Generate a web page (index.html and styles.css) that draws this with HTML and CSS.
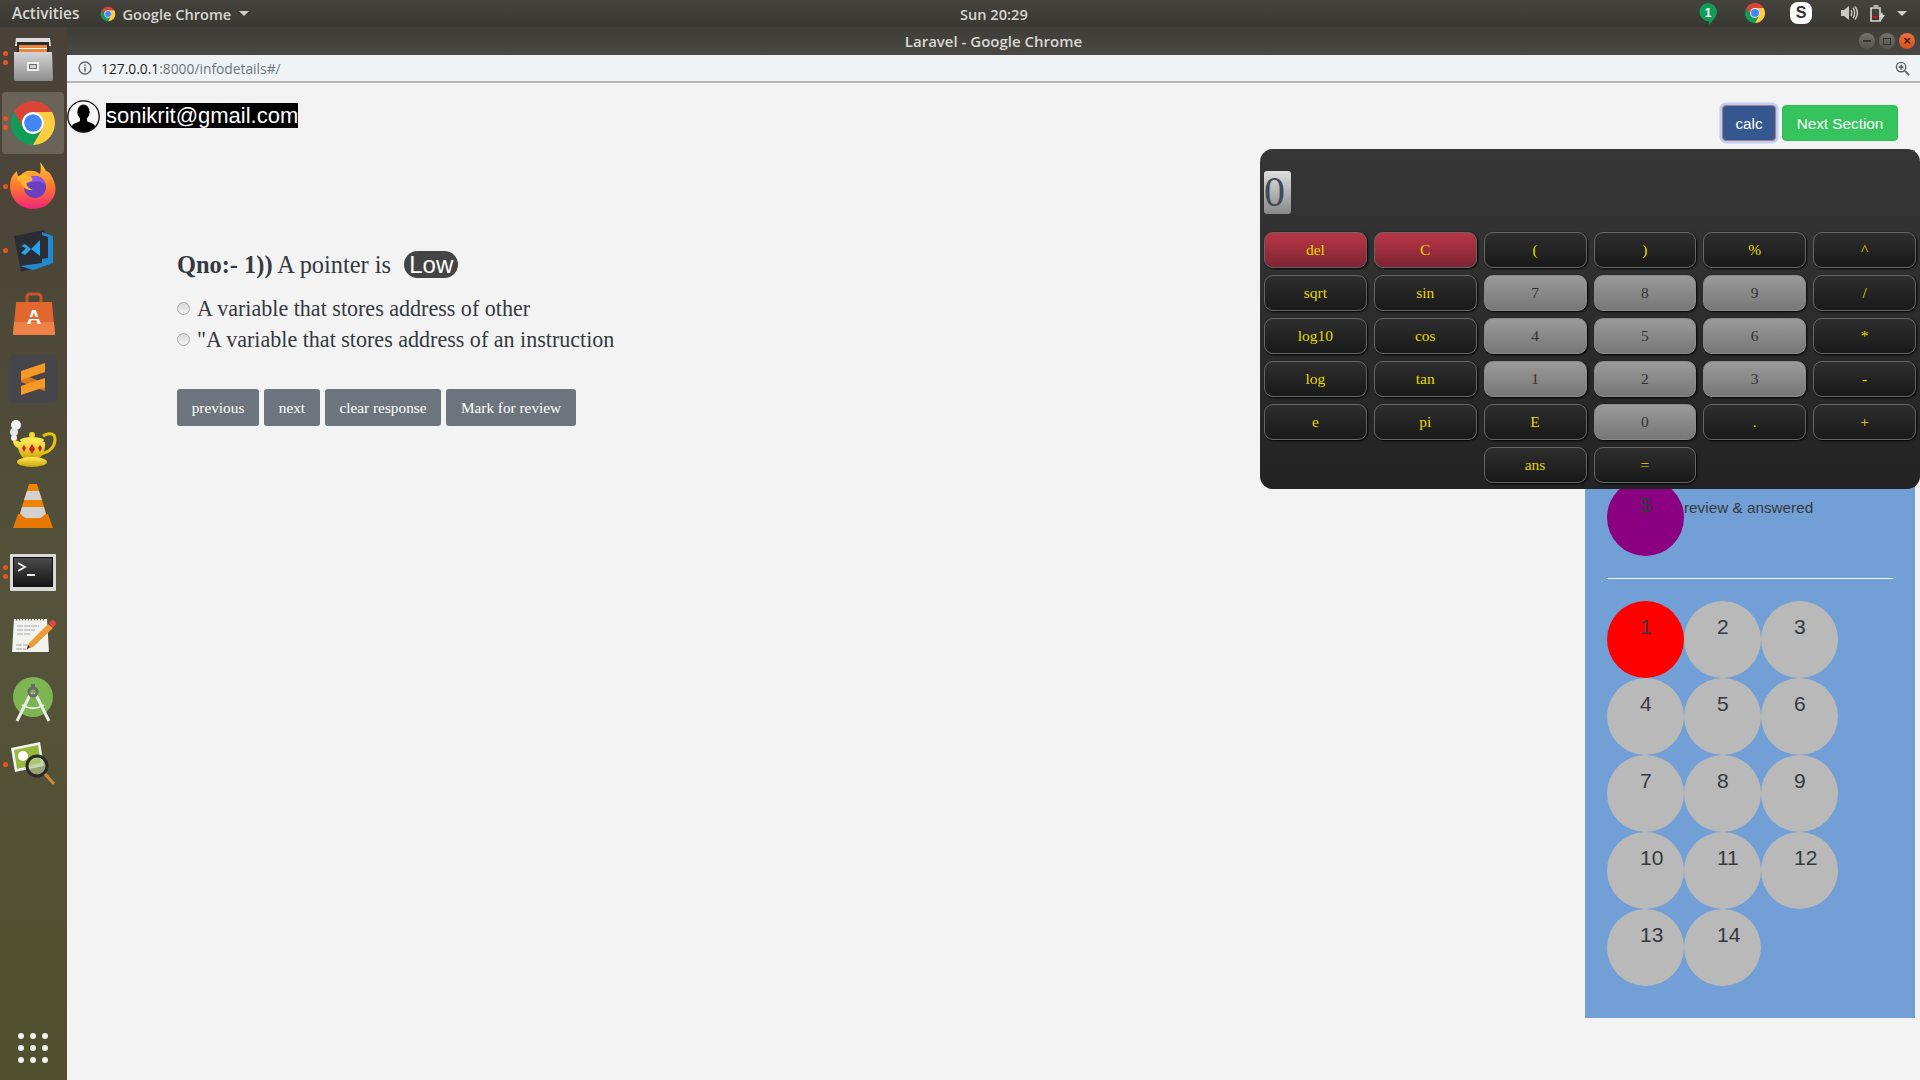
FILE: index.html
```html
<!DOCTYPE html>
<html>
<head>
    <title>Laravel - Google Chrome</title>
    <link rel="stylesheet" href="styles.css">
</head>
<body>
    <svg class="defs" width="0" height="0">
        <symbol id="chrome" viewBox="0 0 48 48">
            <path fill="#db4437" d="M5 13A22 22 0 0 1 43 13H24A11 11 0 0 0 14.5 29.5Z"/>
            <path fill="#0f9d58" d="M5 13L14.5 29.5A11 11 0 0 0 33.5 29.5L24 46A22 22 0 0 1 5 13Z"/>
            <path fill="#ffcd40" d="M43 13A22 22 0 0 1 24 46L33.5 29.5A11 11 0 0 0 24 13Z"/>
            <circle cx="24" cy="24" r="11" fill="#fff"/>
            <circle cx="24" cy="24" r="8.8" fill="#4285f4"/>
        </symbol>
        <linearGradient id="fox" x1="0" y1="0" x2="0" y2="1">
            <stop offset="0" stop-color="#ffc83a"/>
            <stop offset="0.5" stop-color="#ff7a2c"/>
            <stop offset="1" stop-color="#f0237a"/>
        </linearGradient>
        <linearGradient id="steel" x1="0" y1="0" x2="0" y2="1">
            <stop offset="0" stop-color="#d4d4d4"/>
            <stop offset="1" stop-color="#8e8e8e"/>
        </linearGradient>
        <linearGradient id="gold" x1="0" y1="0" x2="0" y2="1">
            <stop offset="0" stop-color="#ffe95a"/>
            <stop offset="1" stop-color="#c9a400"/>
        </linearGradient>
        <linearGradient id="term" x1="0" y1="0" x2="0" y2="1">
            <stop offset="0" stop-color="#4a4a4a"/>
            <stop offset="1" stop-color="#161616"/>
        </linearGradient>
    </svg>

    <header class="topbar">
        <div class="topbar-left">
            <span class="activities">Activities</span>
            <span class="app-menu">
                <svg class="app-icon"><use href="#chrome"/></svg>
                Google Chrome
                <i class="caret"></i>
            </span>
        </div>
        <span class="clock">Sun 20:29</span>
        <div class="tray">
            <svg class="tray-hangouts" viewBox="0 0 20 24">
                <path fill="#0f9d58" d="M10 1a9 9 0 0 1 9 9c0 5-5 9-8 13v-4a9 9 0 0 1-1-18z"/>
                <text x="10" y="15" class="tray-num">1</text>
            </svg>
            <svg class="tray-chrome"><use href="#chrome"/></svg>
            <span class="tray-skype">S</span>
            <svg class="tray-sound" viewBox="0 0 18 16">
                <path fill="#c9c9c5" d="M1 5h3l5-4v14l-5-4H1z"/>
                <path fill="none" stroke="#c9c9c5" stroke-width="1.4" d="M11 5c1 2 1 4 0 6M13 3c2 3 2 7 0 10M15 1.5c3 4 3 9 0 13"/>
            </svg>
            <svg class="tray-battery" viewBox="0 0 15 17">
                <path fill="none" stroke="#d8d8d4" stroke-width="1.6" d="M1 3h9v13H1zM3.5 1h5"/>
                <path fill="#e01010" d="M3 11h4v2H3z"/>
                <path fill="#d8d8d4" d="M12 7l-3 5h2l-1 5 5-7h-2z"/>
            </svg>
            <i class="caret caret-tray"></i>
        </div>
    </header>

    <div class="titlebar">
        <span class="title">Laravel - Google Chrome</span>
        <div class="win-btns">
            <span class="win-btn"><i class="win-min"></i></span>
            <span class="win-btn"><i class="win-max"></i></span>
            <span class="win-btn win-close">&#215;</span>
        </div>
    </div>

    <div class="main">
        <nav class="dock">
            <a class="dock-item">
                <i class="dot dot-a"></i><i class="dot dot-b"></i>
                <svg class="icon-files" viewBox="0 0 40 43">
                    <path fill="#dcdcdc" d="M3 0h34l1 8H2z"/>
                    <path fill="#2d2d2d" d="M4 4h32v10H4z"/>
                    <path fill="#e9873d" d="M6 7h28v8H6z"/>
                    <path fill="#fff" d="M6 10h28v1H6z"/>
                    <path fill="url(#steel)" d="M1 14h38l1 27a2 2 0 0 1-2 2H3a2 2 0 0 1-2-2z"/>
                    <path fill="#efefef" d="M14 24h12v9H14z"/>
                    <path fill="#6d6d6d" d="M16 26h8v5h-8z"/>
                    <path fill="#d0d0d0" d="M17 27h6v3h-6z"/>
                </svg>
            </a>
            <a class="dock-item dock-active">
                <i class="dot dot-a"></i><i class="dot dot-b"></i>
                <svg class="icon-chrome"><use href="#chrome"/></svg>
            </a>
            <a class="dock-item">
                <i class="dot"></i>
                <svg class="icon-firefox" viewBox="0 0 46 47">
                    <path fill="url(#fox)" d="M30 0c4 5 5 7 6 9 2 0 3 1 5 4 5 8 6 16 2 23-4 7-11 11-20 11C10 47 0 37 0 24 0 17 3 12 7 9c0 3 1 5 2 6 2-3 5-5 8-6 5-1 10 0 13 3 1-4 1-8 0-12z"/>
                    <circle cx="25" cy="25" r="11" fill="#6b3fc0"/>
                    <path fill="#8c5ae0" d="M25 14a11 11 0 0 1 11 9c-5-5-13-5-21 0 2-6 5-9 10-9z"/>
                    <path fill="#ffb52e" d="M7 15c5-3 11-3 15 1 2 2-2 4-6 5 1 4 4 6 7 7-6 1-11-3-12-8-2 0-4-2-4-5z"/>
                </svg>
            </a>
            <a class="dock-item">
                <i class="dot"></i>
                <svg class="icon-code" viewBox="0 0 41 42">
                    <path fill="#2a2d34" d="M0 6L30 0l8 33-31 9z"/>
                    <path fill="#1f8ad2" d="M28 2l11 4v27l-20 7-13-4 22-3z"/>
                    <path fill="#2a2d34" d="M28 5l6 2v21l-6 1z"/>
                    <path fill="#2b9fe8" d="M7 16l4-2 6 5 9-9v16l-9-7-6 6-4-2 5-5z"/>
                </svg>
            </a>
            <a class="dock-item">
                <svg class="icon-bag" viewBox="0 0 42 43">
                    <path fill="none" stroke="#c9542a" stroke-width="3" d="M14 12V5a3 3 0 0 1 3-3h8a3 3 0 0 1 3 3v7"/>
                    <path fill="#e0682f" d="M3 10h36l3 33H0z"/>
                    <path fill="#ee8148" d="M1 30h40l1 13H0z"/>
                    <text x="21" y="32" class="bag-letter">A</text>
                    <path fill="#e0682f" d="M13 25h16v2H13z"/>
                </svg>
            </a>
            <a class="dock-item">
                <svg class="icon-sublime" viewBox="0 0 48 48">
                    <rect width="48" height="48" rx="5" fill="#45454a"/>
                    <path fill="#d97a1e" d="M12 19l24 9v8L12 27z"/>
                    <path fill="#f79a25" d="M12 16L36 8v9l-24 8z"/>
                    <path fill="#f79a25" d="M12 31l24-8v9l-24 8z"/>
                </svg>
            </a>
            <a class="dock-item">
                <svg class="icon-teapot" viewBox="0 0 48 47">
                    <circle cx="7" cy="5" r="5" fill="#f2f2f2"/>
                    <circle cx="5" cy="12" r="4" fill="#e6e6e6"/>
                    <circle cx="5" cy="18" r="3" fill="#f2f2f2"/>
                    <path fill="none" stroke="#e8c30a" stroke-width="3" d="M34 16c4-3 12-4 12 3 0 9-6 13-14 15"/>
                    <circle cx="23" cy="15" r="3" fill="#f3d92a"/>
                    <ellipse cx="23" cy="20" rx="12" ry="3" fill="#f7e74a"/>
                    <path fill="url(#gold)" d="M4 20c3 0 5 1 7 2 7-2 17-2 25 0 1 8-3 15-8 18H17c-5-3-7-8-8-12-3-1-5-4-5-8z"/>
                    <path fill="#d01a2a" d="M23 24l3 5-3 5-3-5zM15 25l2 3-2 4-2-4zM31 25l2 3-2 4-2-4z"/>
                    <ellipse cx="23" cy="42" rx="15" ry="5" fill="url(#gold)"/>
                </svg>
            </a>
            <a class="dock-item">
                <svg class="icon-vlc" viewBox="0 0 40 46">
                    <path fill="#f08300" d="M16 0h8l11 36H5z"/>
                    <path fill="#d2d2d2" d="M14 7h12l3 9H11zM9 23h22l3 11H6z"/>
                    <path fill="#e87800" d="M5 30h3c4 7 20 7 24 0h3l5 14H0z"/>
                </svg>
            </a>
            <a class="dock-item">
                <i class="dot dot-c"></i><i class="dot dot-d"></i>
                <svg class="icon-terminal" viewBox="0 0 46 37">
                    <rect width="46" height="37" rx="1" fill="#d9d9d9"/>
                    <rect x="3" y="3" width="40" height="30" fill="#111"/>
                    <rect x="4" y="4" width="38" height="28" fill="url(#term)"/>
                    <path fill="none" stroke="#eee" stroke-width="1.8" d="M8 9l7 4-7 4"/>
                    <path fill="#eee" d="M17 20h8v2h-8z"/>
                </svg>
            </a>
            <a class="dock-item">
                <svg class="icon-notes" viewBox="0 0 45 36">
                    <path fill="#f2f2ee" d="M2 2h33l2 33H0z"/>
                    <path stroke="#555" stroke-width="3" stroke-dasharray="1 2" d="M4 2h30"/>
                    <path stroke="#a8a8a8" stroke-width="1" stroke-dasharray="6 1" d="M5 9h22M5 13h18M5 17h14M4 28h12M4 32h12"/>
                    <path fill="#ee9a36" d="M36 7l5 4-20 19-6 2 2-6z"/>
                    <path fill="#e44" d="M37 6l3-3c2 0 4 2 4 4l-3 4z"/>
                    <path fill="#222" d="M15 32l1-4 2 2z"/>
                </svg>
            </a>
            <a class="dock-item">
                <svg class="icon-android" viewBox="0 0 40 45">
                    <circle cx="20" cy="20" r="20" fill="#7cb552"/>
                    <path fill="none" stroke="#e9ede4" stroke-width="3" d="M18 16L4 44M22 16l14 28"/>
                    <path fill="none" stroke="#e9ede4" stroke-width="2" d="M9 28c7 4 15 4 22 0"/>
                    <circle cx="20" cy="15" r="4" fill="none" stroke="#6a6a6a" stroke-width="3"/>
                    <path fill="#6a6a6a" d="M18 7h4v4h-4z"/>
                </svg>
            </a>
            <a class="dock-item">
                <i class="dot dot-e"></i>
                <svg class="icon-viewer" viewBox="0 0 44 43">
                    <path fill="#f2f2f2" d="M0 6l29-6 4 24-29 6z"/>
                    <path fill="#96b83c" d="M3 8l24-5 3 18-24 6z"/>
                    <circle cx="12" cy="14" r="5" fill="#fff"/>
                    <circle cx="26" cy="24" r="10" fill="#b6c98c" fill-opacity="0.7" stroke="#2a2a2a" stroke-width="3"/>
                    <path stroke="#c9883a" stroke-width="3" d="M34 32l9 10"/>
                </svg>
            </a>
            <div class="apps-grid">
                <i></i><i></i><i></i><i></i><i></i><i></i><i></i><i></i><i></i>
            </div>
        </nav>

        <div class="browser">
            <div class="addressbar">
                <svg class="info-icon" viewBox="0 0 14 14">
                    <circle cx="7" cy="7" r="6" fill="none" stroke="#5f6368" stroke-width="1.3"/>
                    <path fill="#5f6368" d="M6.3 3.3h1.4v1.4H6.3zM6.3 6h1.4v4.7H6.3z"/>
                </svg>
                <span class="url"><b>127.0.0.1</b>:8000/infodetails#/</span>
                <svg class="zoom-icon" viewBox="0 0 16 16">
                    <circle cx="6.5" cy="6.5" r="5" fill="none" stroke="#5f6368" stroke-width="1.5"/>
                    <path stroke="#5f6368" stroke-width="1.8" d="M10.5 10.5l4.5 4.5M4 6.5h5M6.5 4v5"/>
                </svg>
            </div>

            <div class="page">
                <div class="page-head">
                    <div class="user">
                        <svg class="avatar" viewBox="0 0 33 33">
                            <clipPath id="avatar-clip"><circle cx="16.5" cy="16.5" r="15.5"/></clipPath>
                            <circle cx="16.5" cy="16.5" r="15.7" fill="#f8f8f8" stroke="#000" stroke-width="1.3"/>
                            <g clip-path="url(#avatar-clip)">
                                <ellipse cx="16.5" cy="12" rx="6.2" ry="7.5"/>
                                <path d="M13 18h7v3c3 2 7 2 8 5l1 7H4l1-7c1-3 5-3 8-5z"/>
                            </g>
                        </svg>
                        <span class="email">sonikrit@gmail.com</span>
                    </div>
                    <div class="head-btns">
                        <button class="btn-calc">calc</button>
                        <button class="btn-next">Next Section</button>
                    </div>
                </div>

                <div class="content">
                    <section class="question">
                        <h3 class="q-title"><b>Qno:- 1))</b> A pointer is <span class="level">Low</span></h3>
                        <label class="option"><i class="radio"></i>A variable that stores address of other</label>
                        <label class="option"><i class="radio"></i>"A variable that stores address of an instruction</label>
                        <div class="q-actions">
                            <button class="btn-grey">previous</button>
                            <button class="btn-grey">next</button>
                            <button class="btn-grey">clear response</button>
                            <button class="btn-grey">Mark for review</button>
                        </div>
                    </section>

                    <aside class="sidebar">
                        <div class="legend">
                            <span class="qcircle purple">$</span>
                            <span class="legend-text">review &amp; answered</span>
                        </div>
                        <hr class="side-rule">
                        <div class="q-grid">
                            <span class="qcircle red">1</span>
                            <span class="qcircle">2</span>
                            <span class="qcircle">3</span>
                            <span class="qcircle">4</span>
                            <span class="qcircle">5</span>
                            <span class="qcircle">6</span>
                            <span class="qcircle">7</span>
                            <span class="qcircle">8</span>
                            <span class="qcircle">9</span>
                            <span class="qcircle">10</span>
                            <span class="qcircle">11</span>
                            <span class="qcircle">12</span>
                            <span class="qcircle">13</span>
                            <span class="qcircle">14</span>
                        </div>
                    </aside>
                </div>

                <div class="calc">
                    <div class="calc-screen"><span class="calc-value">0</span></div>
                    <div class="calc-keys">
                        <button class="key key-red">del</button>
                        <button class="key key-red">C</button>
                        <button class="key">(</button>
                        <button class="key">)</button>
                        <button class="key">%</button>
                        <button class="key">^</button>
                        <button class="key">sqrt</button>
                        <button class="key">sin</button>
                        <button class="key key-num">7</button>
                        <button class="key key-num">8</button>
                        <button class="key key-num">9</button>
                        <button class="key">/</button>
                        <button class="key">log10</button>
                        <button class="key">cos</button>
                        <button class="key key-num">4</button>
                        <button class="key key-num">5</button>
                        <button class="key key-num">6</button>
                        <button class="key">*</button>
                        <button class="key">log</button>
                        <button class="key">tan</button>
                        <button class="key key-num">1</button>
                        <button class="key key-num">2</button>
                        <button class="key key-num">3</button>
                        <button class="key">-</button>
                        <button class="key">e</button>
                        <button class="key">pi</button>
                        <button class="key">E</button>
                        <button class="key key-num">0</button>
                        <button class="key">.</button>
                        <button class="key">+</button>
                        <button class="key key-col3">ans</button>
                        <button class="key">=</button>
                    </div>
                </div>
            </div>
        </div>
    </div>
</body>
</html>
```

FILE: styles.css
```css
* {
    box-sizing: border-box;
}

html, body {
    margin: 0;
    height: 100%;
    overflow: hidden;
}

body {
    display: flex;
    flex-direction: column;
    background: #f3f3f3;
    font-family: "Liberation Serif", serif;
    color: #343a40;
}

.defs {
    position: absolute;
}

i {
    font-style: normal;
}

/* ubuntu top bar */
.topbar {
    height: 27px;
    display: flex;
    align-items: center;
    justify-content: space-between;
    position: relative;
    padding-left: 12px;
    background: linear-gradient(#45433e, #3a3833);
    color: #d6d6d0;
    font: 600 14.6px "Open Sans", sans-serif;
}

.topbar-left {
    display: flex;
    align-items: center;
    gap: 21px;
}

.activities {
    font-size: 15.4px;
}

.app-menu {
    display: flex;
    align-items: center;
    gap: 6px;
}

.app-icon {
    width: 16px;
    height: 16px;
}

.caret {
    display: inline-block;
    width: 0;
    height: 0;
    margin-left: 2px;
    border: 5px solid transparent;
    border-top: 5px solid #cfcfca;
    border-bottom: 0;
}

.clock {
    position: absolute;
    left: 960px;
}

.tray {
    display: flex;
    align-items: center;
    height: 27px;
    position: relative;
    width: 230px;
}

.tray > * {
    position: absolute;
}

.tray-hangouts {
    left: 8px;
    top: 2px;
    width: 20px;
    height: 24px;
}

.tray-num {
    font: 700 12px "Liberation Sans", sans-serif;
    fill: #fff;
    text-anchor: middle;
}

.tray-chrome {
    left: 54px;
    top: 2px;
    width: 22px;
    height: 22px;
}

.tray-skype {
    left: 100px;
    top: 2px;
    width: 22px;
    height: 22px;
    border-radius: 8px;
    background: #fff;
    color: #333;
    text-align: center;
    font: 700 16px/22px "Liberation Sans", sans-serif;
}

.tray-sound {
    left: 150px;
    top: 5px;
    width: 18px;
    height: 16px;
}

.tray-battery {
    left: 180px;
    top: 5px;
    width: 15px;
    height: 17px;
}

.caret-tray {
    left: 205px;
    top: 11px;
}

.titlebar {
    height: 28px;
    display: flex;
    align-items: center;
    justify-content: center;
    position: relative;
    padding-bottom: 1px;
    background: linear-gradient(#3f3d38, #4a4842);
    color: #d8d8d4;
    font: 600 15px "Open Sans", sans-serif;
}

.title {
    margin-left: 67px;
}

.win-btns {
    position: absolute;
    right: 5px;
    top: 6px;
    display: flex;
    gap: 4px;
}

.win-btn {
    width: 16px;
    height: 16px;
    border-radius: 50%;
    display: flex;
    align-items: center;
    justify-content: center;
    background: linear-gradient(#73716b, #55534e);
}

.win-min {
    width: 8px;
    height: 2px;
    background: #35342f;
}

.win-max {
    width: 8px;
    height: 7px;
    border: 1.5px solid #35342f;
}

.win-close {
    background: linear-gradient(#f0713f, #d4501f);
    color: #4a2010;
    font: 700 13px/16px "Liberation Sans", sans-serif;
}

.main {
    flex: 1;
    display: flex;
    min-height: 0;
}

/* launcher */
.dock {
    width: 67px;
    display: flex;
    flex-direction: column;
    position: relative;
    margin-top: -28px;
    background: linear-gradient(#4a4138 0%, #4e4a38 35%, #55533a 55%, #50502f 100%);
    z-index: 2;
}

.dock-item {
    height: 64px;
    flex: none;
    display: flex;
    align-items: center;
    justify-content: center;
    position: relative;
    margin: 0 3px 0 2px;
    border-radius: 4px;
}

.dock-active {
    height: 62px;
    margin-top: 1px;
    margin-bottom: 1px;
    background: #6a6358;
}

.dot {
    position: absolute;
    left: 0.5px;
    top: 29px;
    width: 5px;
    height: 5px;
    border-radius: 50%;
    background: #e95420;
}

.dot-a {
    top: 24px;
}

.dot-b {
    top: 33px;
}

.dot-c {
    top: 26px;
}

.dot-d {
    top: 35px;
}

.dot-e {
    top: 31px;
}

.icon-files { width: 40px; height: 43px; }
.icon-chrome { width: 48px; height: 48px; }
.icon-firefox { width: 46px; height: 47px; margin-bottom: 4px; }
.icon-code { width: 41px; height: 42px; margin-left: 3px; }
.icon-bag { width: 42px; height: 43px; margin: 0 0 4px 2px; }
.icon-sublime { width: 48px; height: 48px; }
.icon-teapot { width: 48px; height: 47px; }
.icon-vlc { width: 40px; height: 46px; }
.icon-terminal { width: 46px; height: 37px; margin-top: 2px; }
.icon-notes { width: 45px; height: 36px; margin-left: 2px; }
.icon-android { width: 40px; height: 45px; }
.icon-viewer { width: 44px; height: 43px; }

.bag-letter {
    font: 700 20px "Liberation Sans", sans-serif;
    fill: #fff;
    text-anchor: middle;
}

.apps-grid {
    margin-top: auto;
    margin-bottom: 17px;
    margin-left: 18px;
    display: grid;
    grid-template-columns: repeat(3, 6px);
    gap: 6px;
}

.apps-grid i {
    width: 6px;
    height: 6px;
    border-radius: 50%;
    background: #f0f0ec;
}

/* browser */
.browser {
    flex: 1;
    display: flex;
    flex-direction: column;
    min-width: 0;
}

.addressbar {
    height: 28px;
    display: flex;
    align-items: center;
    padding: 0 10px 0 11px;
    background: #f0f3f5;
    border-bottom: 2px solid #b4b6b6;
}

.info-icon {
    width: 14px;
    height: 14px;
}

.url {
    margin-left: 9px;
    font: 13.8px "Open Sans", sans-serif;
    color: #6b7680;
}

.url b {
    font-weight: 400;
    color: #222;
}

.zoom-icon {
    margin-left: auto;
    width: 15px;
    height: 15px;
}

.page {
    flex: 1;
    position: relative;
    display: flex;
    flex-direction: column;
    background: #f3f3f3;
}

.page-head {
    height: 67px;
    display: flex;
    justify-content: space-between;
}

.user {
    display: flex;
    align-items: flex-start;
    padding-top: 17px;
}

.avatar {
    width: 33px;
    height: 33px;
}

.email {
    margin: 3px 0 0 6px;
    background: #000;
    color: #fff;
    font: 22px/25px "Liberation Sans", sans-serif;
}

.head-btns {
    display: flex;
    align-items: flex-start;
    gap: 6px;
    padding: 22px 22px 0 0;
}

.btn-calc, .btn-next {
    height: 36px;
    padding-top: 2px;
    border-radius: 4px;
    color: #fff;
    font: 15.3px "Liberation Sans", sans-serif;
}

.btn-calc {
    width: 54px;
    background: #34578f;
    border: 1px solid #b87a80;
    box-shadow: 0 0 0 2.5px #bcd0f5;
}

.btn-next {
    width: 116px;
    background: #34c35c;
    border: 1px solid #2fbd58;
}

.content {
    flex: 1;
    display: flex;
    justify-content: space-between;
    min-height: 0;
}

.question {
    padding: 100px 0 0 110px;
}

.q-title {
    margin: 0 0 14px;
    font-size: 24.4px;
    font-weight: 400;
    line-height: 29px;
}

.q-title b {
    font-weight: 700;
}

.level {
    display: inline-block;
    margin-left: 7px;
    padding: 0 5px;
    height: 27px;
    border-radius: 14px;
    background: #444;
    color: #fff;
    font: 24px/27px "Liberation Sans", sans-serif;
}

.option {
    display: flex;
    align-items: center;
    height: 31px;
    font-size: 22.05px;
}

.radio {
    width: 13px;
    height: 13px;
    margin-right: 7px;
    border-radius: 50%;
    border: 1px solid #a8a8a8;
    background: linear-gradient(#d8d8d8, #f4f4f4);
}

.q-actions {
    display: flex;
    gap: 5px;
    margin-top: 34px;
}

.btn-grey {
    height: 37px;
    padding: 0 14.7px;
    border: 0;
    border-radius: 3px;
    background: #6c757d;
    color: #fff;
    font: 15.3px "Liberation Serif", serif;
}

/* question palette */
.sidebar {
    width: 330px;
    height: 868px;
    margin-right: 5px;
    padding: 329px 22px 0;
    background: #739fd7;
    font-family: "Liberation Sans", sans-serif;
}

.legend {
    display: flex;
    align-items: flex-start;
}

.qcircle {
    display: block;
    width: 77px;
    height: 77px;
    padding: 14px 0 0 33px;
    border-radius: 50%;
    background: #b9b9b9;
    font-size: 21px;
    line-height: 24px;
}

.purple {
    background: #8b0080;
}

.red {
    background: #ff0000;
}

.legend-text {
    margin-top: 20px;
    font-size: 15.3px;
    line-height: 18px;
}

.side-rule {
    margin: 22px 0;
    border: 0;
    border-top: 1px solid #f2f2f2;
}

.q-grid {
    display: grid;
    grid-template-columns: repeat(3, 77px);
    grid-auto-rows: 77px;
}

/* calculator popup */
.calc {
    position: absolute;
    top: 66px;
    right: 0;
    width: 660px;
    height: 340px;
    padding: 22px 4px 0;
    border-radius: 13px;
    background: linear-gradient(#363636, #232323);
}

.calc-screen {
    height: 61px;
}

.calc-value {
    display: inline-block;
    height: 43px;
    width: 27px;
    border-radius: 3px;
    background: linear-gradient(#dedede, #888);
    font-size: 42px;
    line-height: 43px;
    color: #3f4a58;
}

.calc-keys {
    display: grid;
    grid-template-columns: repeat(6, 1fr);
    grid-auto-rows: 36px;
    gap: 7px;
}

.key {
    border: 1px solid #666;
    border-radius: 9px;
    background: linear-gradient(#2e2e2e, #191919);
    color: #e6d900;
    font: 15.5px "Liberation Serif", serif;
    box-shadow: 1px 1px 2px #000;
}

.key-red {
    background: linear-gradient(#ba3646, #7e2433);
}

.key-num {
    border-color: #8a8a8a;
    background: linear-gradient(#9a9a9a, #777);
    color: #333;
}

.key-col3 {
    grid-column: 3;
}
```
